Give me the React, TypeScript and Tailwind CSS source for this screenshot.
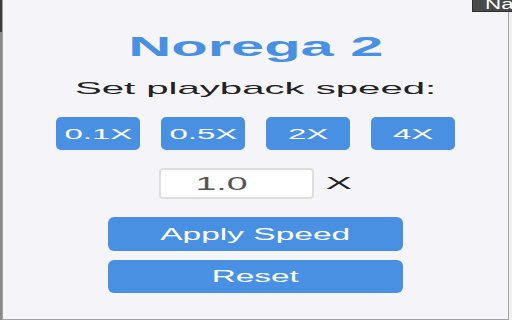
const speeds = ["0.1X", "0.5X", "2X", "4X"];

const App = () => {
	return (
		<div
			className="relative flex h-[320px] w-[512px] overflow-hidden bg-[#f1f1f1]"
			style={{ fontFamily: '"Liberation Sans", Arial, sans-serif' }}
		>
			{/* page behind the popup */}
			<div className="flex w-[2px] flex-col">
				<div className="h-[32px] bg-[#3c3c3c]" />
				<div className="flex-1 bg-[#8a8a8a]" />
			</div>

			<div className="box-border flex h-[320px] w-[507px] flex-col items-center border-x border-b border-[#a2a2a2] bg-[#f5f5f9]">
				<div className="mt-[33px] h-[28px] text-[28px] font-bold leading-[28px] text-[#4a90e2]">
					<span className="inline-block whitespace-nowrap [transform:scaleX(2.13)]">
						Norega 2
					</span>
				</div>

				<div className="mt-[19px] h-[17px] text-[17px] leading-[17px] text-[#222]">
					<span className="inline-block whitespace-nowrap [transform:scaleX(2.36)]">
						Set playback speed:
					</span>
				</div>

				<div className="mt-[20px] flex gap-[21px]">
					{speeds.map((s) => (
						<div
							key={s}
							className="flex h-[33px] w-[84px] items-center justify-center rounded-[5px] bg-[#4a90e2] text-[15px] leading-none text-white"
						>
							<span className="inline-block whitespace-nowrap [transform:scaleX(2.2)]">
								{s}
							</span>
						</div>
					))}
				</div>

				<div className="mt-[18px] flex items-center gap-[12px]">
					<div className="box-border flex h-[31px] w-[155px] items-center justify-center rounded-[4px] border-2 border-[#dedede] bg-white pr-[29px] text-[18px] leading-none text-[#555]">
						<span className="inline-block whitespace-nowrap [transform:scaleX(2.08)]">
							1.0
						</span>
					</div>
					<div className="flex w-[26px] justify-center text-[17px] leading-none text-[#222]">
						<span className="inline-block [transform:scaleX(2.3)]">X</span>
					</div>
				</div>

				<div className="mt-[18px] flex h-[34px] w-[295px] items-center justify-center rounded-[6px] bg-[#4a90e2] text-[17px] leading-none text-white">
					<span className="inline-block whitespace-nowrap [transform:scaleX(1.97)]">
						Apply Speed
					</span>
				</div>

				<div className="mt-[9px] flex h-[33px] w-[295px] items-center justify-center rounded-[6px] bg-[#4a90e2] text-[17px] leading-none text-white">
					<span className="inline-block whitespace-nowrap [transform:scaleX(1.96)]">
						Reset
					</span>
				</div>
			</div>

			{/* tooltip from the browser */}
			<div className="absolute right-0 top-0 h-[12px] w-[40px] overflow-hidden border-b border-l border-[#2e2e2e] bg-[#4a4a4a]">
				<span className="absolute left-[12px] top-[-4px] inline-block origin-left whitespace-nowrap text-[14px] leading-[16px] text-white [transform:scaleX(1.6)]">
					Na
				</span>
			</div>
		</div>
	);
};

export default App;
